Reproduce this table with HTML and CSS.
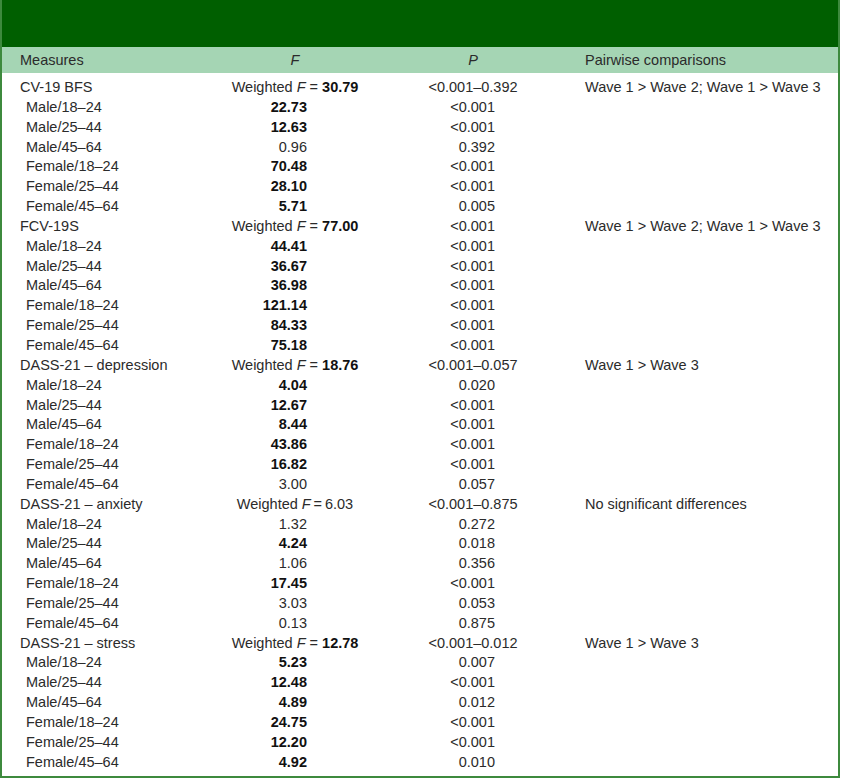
FILE: index.html
```html
<!DOCTYPE html>
<html>
<head>
<meta charset="utf-8">
<link rel="stylesheet" href="styles.css">
</head>
<body>
<div class="frame">
  <div class="band"></div>
  <table class="tbl">
    <colgroup>
      <col class="c1"><col class="c2"><col class="c3"><col class="c4">
    </colgroup>
    <thead>
      <tr>
        <th class="h-m">Measures</th>
        <th class="h-c"><i>F</i></th>
        <th class="h-c"><i>P</i></th>
        <th class="h-pw">Pairwise comparisons</th>
      </tr>
    </thead>
    <tbody>
      <tr class="first"><td class="m">CV-19 BFS</td><td class="w">Weighted <i>F</i> = <b>30.79</b></td><td class="pr">&lt;0.001–0.392</td><td class="pw">Wave 1 &gt; Wave 2; Wave 1 &gt; Wave 3</td></tr>
      <tr><td class="s">Male/18–24</td><td class="f"><b>22.73</b></td><td class="p">&lt;0.001</td><td></td></tr>
      <tr><td class="s">Male/25–44</td><td class="f"><b>12.63</b></td><td class="p">&lt;0.001</td><td></td></tr>
      <tr><td class="s">Male/45–64</td><td class="f">0.96</td><td class="p">0.392</td><td></td></tr>
      <tr><td class="s">Female/18–24</td><td class="f"><b>70.48</b></td><td class="p">&lt;0.001</td><td></td></tr>
      <tr><td class="s">Female/25–44</td><td class="f"><b>28.10</b></td><td class="p">&lt;0.001</td><td></td></tr>
      <tr><td class="s">Female/45–64</td><td class="f"><b>5.71</b></td><td class="p">0.005</td><td></td></tr>

      <tr><td class="m">FCV-19S</td><td class="w">Weighted <i>F</i> = <b>77.00</b></td><td class="p">&lt;0.001</td><td class="pw">Wave 1 &gt; Wave 2; Wave 1 &gt; Wave 3</td></tr>
      <tr><td class="s">Male/18–24</td><td class="f"><b>44.41</b></td><td class="p">&lt;0.001</td><td></td></tr>
      <tr><td class="s">Male/25–44</td><td class="f"><b>36.67</b></td><td class="p">&lt;0.001</td><td></td></tr>
      <tr><td class="s">Male/45–64</td><td class="f"><b>36.98</b></td><td class="p">&lt;0.001</td><td></td></tr>
      <tr><td class="s">Female/18–24</td><td class="f"><b>121.14</b></td><td class="p">&lt;0.001</td><td></td></tr>
      <tr><td class="s">Female/25–44</td><td class="f"><b>84.33</b></td><td class="p">&lt;0.001</td><td></td></tr>
      <tr><td class="s">Female/45–64</td><td class="f"><b>75.18</b></td><td class="p">&lt;0.001</td><td></td></tr>

      <tr><td class="m">DASS-21 – depression</td><td class="w">Weighted <i>F</i> = <b>18.76</b></td><td class="pr">&lt;0.001–0.057</td><td class="pw">Wave 1 &gt; Wave 3</td></tr>
      <tr><td class="s">Male/18–24</td><td class="f"><b>4.04</b></td><td class="p">0.020</td><td></td></tr>
      <tr><td class="s">Male/25–44</td><td class="f"><b>12.67</b></td><td class="p">&lt;0.001</td><td></td></tr>
      <tr><td class="s">Male/45–64</td><td class="f"><b>8.44</b></td><td class="p">&lt;0.001</td><td></td></tr>
      <tr><td class="s">Female/18–24</td><td class="f"><b>43.86</b></td><td class="p">&lt;0.001</td><td></td></tr>
      <tr><td class="s">Female/25–44</td><td class="f"><b>16.82</b></td><td class="p">&lt;0.001</td><td></td></tr>
      <tr><td class="s">Female/45–64</td><td class="f">3.00</td><td class="p">0.057</td><td></td></tr>

      <tr><td class="m">DASS-21 – anxiety</td><td class="w">Weighted <i>F</i>&thinsp;=&thinsp;6.03</td><td class="pr">&lt;0.001–0.875</td><td class="pw">No significant differences</td></tr>
      <tr><td class="s">Male/18–24</td><td class="f">1.32</td><td class="p">0.272</td><td></td></tr>
      <tr><td class="s">Male/25–44</td><td class="f"><b>4.24</b></td><td class="p">0.018</td><td></td></tr>
      <tr><td class="s">Male/45–64</td><td class="f">1.06</td><td class="p">0.356</td><td></td></tr>
      <tr><td class="s">Female/18–24</td><td class="f"><b>17.45</b></td><td class="p">&lt;0.001</td><td></td></tr>
      <tr><td class="s">Female/25–44</td><td class="f">3.03</td><td class="p">0.053</td><td></td></tr>
      <tr><td class="s">Female/45–64</td><td class="f">0.13</td><td class="p">0.875</td><td></td></tr>

      <tr><td class="m">DASS-21 – stress</td><td class="w">Weighted <i>F</i> = <b>12.78</b></td><td class="pr">&lt;0.001–0.012</td><td class="pw">Wave 1 &gt; Wave 3</td></tr>
      <tr><td class="s">Male/18–24</td><td class="f"><b>5.23</b></td><td class="p">0.007</td><td></td></tr>
      <tr><td class="s">Male/25–44</td><td class="f"><b>12.48</b></td><td class="p">&lt;0.001</td><td></td></tr>
      <tr><td class="s">Male/45–64</td><td class="f"><b>4.89</b></td><td class="p">0.012</td><td></td></tr>
      <tr><td class="s">Female/18–24</td><td class="f"><b>24.75</b></td><td class="p">&lt;0.001</td><td></td></tr>
      <tr><td class="s">Female/25–44</td><td class="f"><b>12.20</b></td><td class="p">&lt;0.001</td><td></td></tr>
      <tr><td class="s">Female/45–64</td><td class="f"><b>4.92</b></td><td class="p">0.010</td><td></td></tr>
    </tbody>
  </table>
</div>
</body>
</html>
```

FILE: styles.css
```css
html, body {
  margin: 0;
  padding: 0;
  background: #ffffff;
}

body {
  font-family: "Liberation Sans", Arial, sans-serif;
  font-size: 14.5px;
  color: #2b2b2b;
}

.frame {
  box-sizing: border-box;
  width: 840px;
  border-left: 2px solid #3d8a3d;
  border-right: 2px solid #3d8a3d;
  border-bottom: 2px solid #3d8a3d;
  padding-bottom: 3px;
}

.band {
  height: 47px;
  background: #005f00;
}

.tbl {
  width: 100%;
  border-collapse: collapse;
  table-layout: fixed;
}

.c1 { width: 198px; }
.c2 { width: 190px; }
.c3 { width: 166px; }
.c4 { width: auto; }

thead th {
  background: #a5d5b4;
  font-weight: normal;
  height: 26px;
  padding: 0;
  line-height: 26px;
  border-bottom: 5px solid #ffffff;
}

.h-m { text-align: left; padding-left: 18px; }
.h-c { text-align: center; }
.h-pw { text-align: left; padding-left: 29px; }

tbody td {
  padding: 0;
  height: 19.85px;
  line-height: 19.85px;
  white-space: nowrap;
}

td.m { padding-left: 18px; }
td.s { padding-left: 24px; }
td.w { text-align: center; }
td.f { text-align: right; padding-right: 83px; }
td.pr { text-align: center; }
td.p { text-align: right; padding-right: 61px; }
td.pw { padding-left: 29px; }

b { font-weight: bold; color: #111; }
```
